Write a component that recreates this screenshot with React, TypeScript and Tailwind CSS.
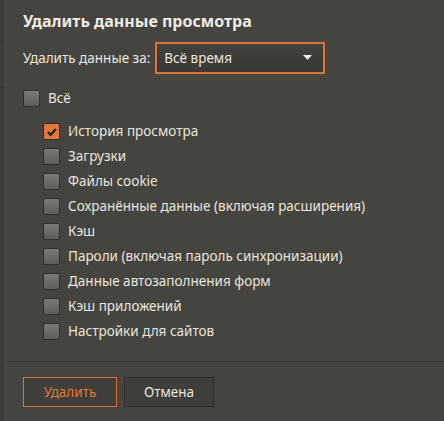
const FONT = { fontFamily: '"Noto Sans", "Open Sans", sans-serif' };

const items = [
  { label: "История просмотра", checked: true },
  { label: "Загрузки" },
  { label: "Файлы cookie" },
  { label: "Сохранённые данные (включая расширения)" },
  { label: "Кэш" },
  { label: "Пароли (включая пароль синхронизации)" },
  { label: "Данные автозаполнения форм" },
  { label: "Кэш приложений" },
  { label: "Настройки для сайтов" },
];

function Box({ checked }: { checked?: boolean }) {
  if (checked) {
    return (
      <span className="flex h-[17px] w-[17px] shrink-0 items-center justify-center rounded-[2px] border border-[#2f2d2a] bg-[#e2783e]">
        <svg width="12" height="12" viewBox="0 0 12 12">
          <path d="M2 6.2 4.6 8.8 10 3" fill="none" stroke="#2a2724" strokeWidth="2.4" />
        </svg>
      </span>
    );
  }
  return (
    <span className="h-[17px] w-[17px] shrink-0 rounded-[2px] border border-[#302e2b] bg-gradient-to-b from-[#7c7a77] to-[#5f5d5a]" />
  );
}

export default function App() {
  return (
    <div className="flex h-[421px] w-[444px] bg-[#3d3b37]" style={FONT}>
      <div className="flex w-[3px] flex-col">
        <div className="h-[42px] border-b border-[#33312e]" />
        <div className="h-[46px] border-b border-[#33312e]" />
      </div>
      <div className="flex flex-1 flex-col border-l border-[#3a3834] bg-[#46443f] text-[#e8e5de]">
        <div className="flex-1 pl-[19px] pt-[8px]">
          <h1 className="text-[16px] font-bold leading-[26px] text-[#eeebe4]">Удалить данные просмотра</h1>
          <div className="mt-[8px] flex items-center gap-[5px]">
            <span className="text-[13.5px]">Удалить данные за:</span>
            <div className="flex h-[32px] w-[170px] items-center justify-between border-2 border-[#d77440] bg-gradient-to-b from-[#43413c] to-[#3a3834] pl-[7px] pr-[11px] text-[13.5px]">
              <span>Всё время</span>
              <svg width="9" height="6" viewBox="0 0 9 6">
                <path d="M0 0h9L4.5 5z" fill="#ece9e2" />
              </svg>
            </div>
          </div>
          <label className="mt-[16px] flex items-center gap-[8px] text-[13.5px] leading-[17px]">
            <Box />
            <span>Всё</span>
          </label>
          <ul className="mt-[16px] flex flex-col gap-[8px] pl-[20px]">
            {items.map((it) => (
              <li key={it.label} className="flex items-center gap-[8px] text-[13.5px] leading-[17px]">
                <Box checked={it.checked} />
                <span>{it.label}</span>
              </li>
            ))}
          </ul>
        </div>
        <div className="flex h-[60px] gap-[7px] border-t border-[#3a3834] pl-[19px] pt-[15px]">
          <button className="h-[30px] w-[94px] border border-[#d77440] bg-[#403e3a] text-[13.5px] text-[#e0773f]">
            Удалить
          </button>
          <button className="h-[30px] w-[90px] border border-[#2e2c29] bg-[#403e3a] text-[13.5px] text-[#e8e5de]">
            Отмена
          </button>
        </div>
      </div>
    </div>
  );
}
